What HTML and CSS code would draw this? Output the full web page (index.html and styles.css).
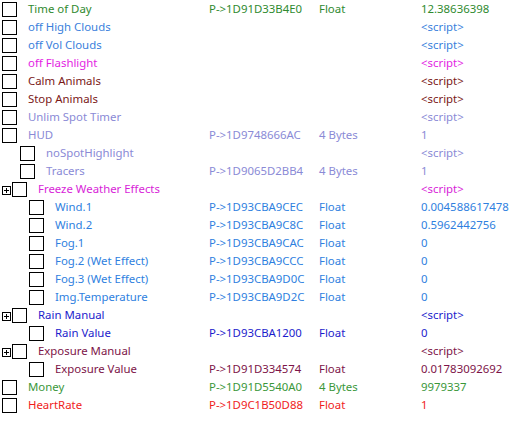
FILE: index.html
```html
<!DOCTYPE html>
<html>
<head>
<meta charset="utf-8">
<link rel="stylesheet" href="styles.css">
</head>
<body>
<div class="table">
  <div class="row c-green"><div class="tree"><span class="cb"></span><span class="name">Time of Day</span></div><div class="addr">P-&gt;1D91D33B4E0</div><div class="type">Float</div><div class="val">12.38636398</div></div>
  <div class="row c-blue"><div class="tree"><span class="cb"></span><span class="name">off High Clouds</span></div><div class="addr"></div><div class="type"></div><div class="val">&lt;script&gt;</div></div>
  <div class="row c-blue"><div class="tree"><span class="cb"></span><span class="name">off Vol Clouds</span></div><div class="addr"></div><div class="type"></div><div class="val">&lt;script&gt;</div></div>
  <div class="row c-magenta"><div class="tree"><span class="cb"></span><span class="name">off Flashlight</span></div><div class="addr"></div><div class="type"></div><div class="val">&lt;script&gt;</div></div>
  <div class="row c-maroon"><div class="tree"><span class="cb"></span><span class="name">Calm Animals</span></div><div class="addr"></div><div class="type"></div><div class="val">&lt;script&gt;</div></div>
  <div class="row c-maroon"><div class="tree"><span class="cb"></span><span class="name">Stop Animals</span></div><div class="addr"></div><div class="type"></div><div class="val">&lt;script&gt;</div></div>
  <div class="row c-lav"><div class="tree"><span class="cb"></span><span class="name">Unlim Spot Timer</span></div><div class="addr"></div><div class="type"></div><div class="val">&lt;script&gt;</div></div>
  <div class="row c-lav"><div class="tree"><span class="cb"></span><span class="name">HUD</span></div><div class="addr">P-&gt;1D9748666AC</div><div class="type">4 Bytes</div><div class="val">1</div></div>
  <div class="row c-lav"><div class="tree lvl1"><span class="cb"></span><span class="name">noSpotHighlight</span></div><div class="addr"></div><div class="type"></div><div class="val">&lt;script&gt;</div></div>
  <div class="row c-lav"><div class="tree lvl1"><span class="cb"></span><span class="name">Tracers</span></div><div class="addr">P-&gt;1D9065D2BB4</div><div class="type">4 Bytes</div><div class="val">1</div></div>
  <div class="row c-magenta2"><div class="tree"><span class="exp"></span><span class="cb"></span><span class="name">Freeze Weather Effects</span></div><div class="addr"></div><div class="type"></div><div class="val">&lt;script&gt;</div></div>
  <div class="row c-wind"><div class="tree lvl2"><span class="cb"></span><span class="name">Wind.1</span></div><div class="addr">P-&gt;1D93CBA9CEC</div><div class="type">Float</div><div class="val">0.004588617478</div></div>
  <div class="row c-wind"><div class="tree lvl2"><span class="cb"></span><span class="name">Wind.2</span></div><div class="addr">P-&gt;1D93CBA9C8C</div><div class="type">Float</div><div class="val">0.5962442756</div></div>
  <div class="row c-wind"><div class="tree lvl2"><span class="cb"></span><span class="name">Fog.1</span></div><div class="addr">P-&gt;1D93CBA9CAC</div><div class="type">Float</div><div class="val">0</div></div>
  <div class="row c-wind"><div class="tree lvl2"><span class="cb"></span><span class="name">Fog.2 (Wet Effect)</span></div><div class="addr">P-&gt;1D93CBA9CCC</div><div class="type">Float</div><div class="val">0</div></div>
  <div class="row c-wind"><div class="tree lvl2"><span class="cb"></span><span class="name">Fog.3 (Wet Effect)</span></div><div class="addr">P-&gt;1D93CBA9D0C</div><div class="type">Float</div><div class="val">0</div></div>
  <div class="row c-wind"><div class="tree lvl2"><span class="cb"></span><span class="name">Img.Temperature</span></div><div class="addr">P-&gt;1D93CBA9D2C</div><div class="type">Float</div><div class="val">0</div></div>
  <div class="row c-rain"><div class="tree"><span class="exp"></span><span class="cb"></span><span class="name">Rain Manual</span></div><div class="addr"></div><div class="type"></div><div class="val">&lt;script&gt;</div></div>
  <div class="row c-rain"><div class="tree lvl2"><span class="cb"></span><span class="name">Rain Value</span></div><div class="addr">P-&gt;1D93CBA1200</div><div class="type">Float</div><div class="val">0</div></div>
  <div class="row c-plum"><div class="tree"><span class="exp"></span><span class="cb"></span><span class="name">Exposure Manual</span></div><div class="addr"></div><div class="type"></div><div class="val">&lt;script&gt;</div></div>
  <div class="row c-plum"><div class="tree lvl2"><span class="cb"></span><span class="name">Exposure Value</span></div><div class="addr">P-&gt;1D91D334574</div><div class="type">Float</div><div class="val">0.01783092692</div></div>
  <div class="row c-green2"><div class="tree"><span class="cb"></span><span class="name">Money</span></div><div class="addr">P-&gt;1D91D5540A0</div><div class="type">4 Bytes</div><div class="val">9979337</div></div>
  <div class="row c-red"><div class="tree"><span class="cb"></span><span class="name">HeartRate</span></div><div class="addr">P-&gt;1D9C1B50D88</div><div class="type">Float</div><div class="val">1</div></div>
</div>
</body>
</html>
```
FILE: styles.css
```css
html, body {
  margin: 0;
  padding: 0;
  background: #ffffff;
}
body {
  font-family: "Noto Sans", "Open Sans", sans-serif;
  font-size: 11.4px;
}
.row {
  display: grid;
  grid-template-columns: 209px 110px 102px 1fr;
  height: 18px;
  line-height: 17px;
  white-space: nowrap;
}
.tree {
  display: flex;
  align-items: flex-start;
  padding-left: 2px;
}
.tree.lvl1 { padding-left: 20px; }
.tree.lvl2 { padding-left: 29px; }
.cb {
  box-sizing: border-box;
  width: 15px;
  height: 15px;
  border: 1px solid #000;
  background: #fff;
  flex: none;
  margin-top: 2px;
}
.name {
  margin-left: 11px;
}
.exp {
  box-sizing: border-box;
  width: 9px;
  height: 9px;
  border: 1px solid #000;
  margin-right: 1px;
  margin-top: 6px;
  position: relative;
  flex: none;
}
.exp::before {
  content: "";
  position: absolute;
  left: 1px;
  top: 3px;
  width: 5px;
  height: 1px;
  background: #000;
}
.exp::after {
  content: "";
  position: absolute;
  left: 3px;
  top: 1px;
  width: 1px;
  height: 5px;
  background: #000;
}
.c-green { color: #2f8a2f; }
.c-green2 { color: #3a973a; }
.c-blue { color: #3a7fdc; }
.c-magenta { color: #e31ee3; }
.c-magenta2 { color: #d81ed8; }
.c-maroon { color: #7a1818; }
.c-lav { color: #8a8ad6; }
.c-wind { color: #2f7fe0; }
.c-rain { color: #1c1ccc; }
.c-plum { color: #7d1448; }
.c-red { color: #f01c1c; }
```
